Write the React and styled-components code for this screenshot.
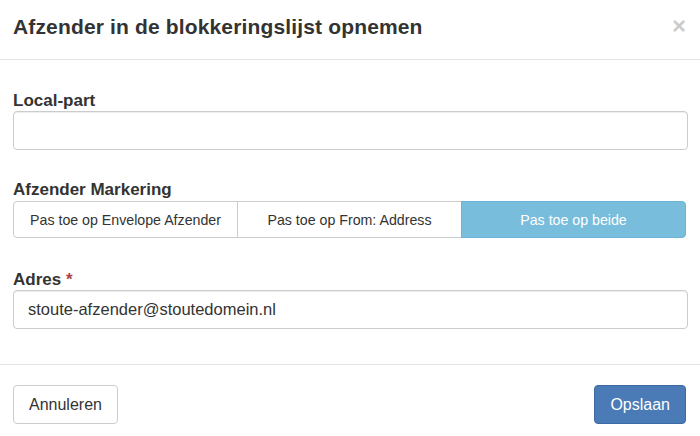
import React, { useState } from "react";
import styled, { createGlobalStyle } from "styled-components";

const GlobalStyle = createGlobalStyle`
  html, body {
    margin: 0;
    padding: 0;
    background: #fff;
  }
  body {
    font-family: "Liberation Sans", Arial, Helvetica, sans-serif;
    color: #333;
  }
  * {
    box-sizing: border-box;
  }
`;

const MODES = [
  { key: "envelope", label: "Pas toe op Envelope Afzender" },
  { key: "from", label: "Pas toe op From: Address" },
  { key: "both", label: "Pas toe op beide" },
];

export default function App() {
  const [localPart, setLocalPart] = useState("");
  const [mode, setMode] = useState("both");
  const [address, setAddress] = useState("stoute-afzender@stoutedomein.nl");

  return (
    <>
      <GlobalStyle />
      <Modal>
        <Header>
          <Title>Afzender in de blokkeringslijst opnemen</Title>
          <Close type="button" aria-label="Sluiten">
            ×
          </Close>
        </Header>
        <Body>
          <Group>
            <Label htmlFor="local-part">Local-part</Label>
            <Input
              id="local-part"
              value={localPart}
              onChange={(e) => setLocalPart(e.target.value)}
            />
          </Group>
          <Group $gap={32}>
            <Label>Afzender Markering</Label>
            <ButtonGroup>
              {MODES.map((m) => (
                <Segment
                  key={m.key}
                  type="button"
                  $active={mode === m.key}
                  onClick={() => setMode(m.key)}
                >
                  {m.label}
                </Segment>
              ))}
            </ButtonGroup>
          </Group>
          <Group>
            <Label htmlFor="adres">
              Adres <Required>*</Required>
            </Label>
            <Input
              id="adres"
              value={address}
              onChange={(e) => setAddress(e.target.value)}
            />
          </Group>
        </Body>
        <Footer>
          <Button type="button">Annuleren</Button>
          <Button type="button" $primary>
            Opslaan
          </Button>
        </Footer>
      </Modal>
    </>
  );
}

const Modal = styled.div`
  width: 700px;
  height: 436px;
  background: #fff;
  display: flex;
  flex-direction: column;
`;

const Header = styled.div`
  display: flex;
  align-items: center;
  justify-content: space-between;
  padding: 12px 13px 17px 13px;
  border-bottom: 1px solid #e5e5e5;
`;

const Title = styled.h4`
  margin: 0;
  font-size: 21px;
  font-weight: bold;
  line-height: 30px;
  letter-spacing: 0.15px;
  color: #333;
`;

const Close = styled.button`
  border: 0;
  background: transparent;
  padding: 0;
  margin: -2px 1px 0 0;
  font-family: "Liberation Sans", Arial, sans-serif;
  font-size: 24px;
  font-weight: bold;
  line-height: 1;
  color: #000;
  opacity: 0.2;
  cursor: pointer;
`;

const Body = styled.div`
  padding: 31px 12px 35px 13px;
`;

const Group = styled.div`
  margin-bottom: ${({ $gap }) => $gap || 30}px;
  &:last-child {
    margin-bottom: 0;
  }
`;

const Label = styled.label`
  display: block;
  font-size: 17px;
  font-weight: bold;
  line-height: 20px;
  color: #333;
`;

const Required = styled.span`
  color: #a94442;
`;

const Input = styled.input`
  display: block;
  width: 100%;
  height: 39px;
  padding: 6px 14px;
  font-family: "Liberation Sans", Arial, sans-serif;
  font-size: 16.5px;
  color: #333;
  background: #fff;
  border: 1px solid #ccc;
  border-radius: 4px;
  box-shadow: inset 0 1px 1px rgba(0, 0, 0, 0.075);
  outline: none;
`;

const ButtonGroup = styled.div`
  display: flex;
  margin: 1px 2px 0 0;
`;

const Segment = styled.button`
  flex: 1;
  height: 37px;
  margin-left: -1px;
  padding: 0 6px;
  font-family: "Liberation Sans", Arial, sans-serif;
  font-size: 14.2px;
  color: ${({ $active }) => ($active ? "#fff" : "#333")};
  background: ${({ $active }) => ($active ? "#78bddb" : "#fff")};
  border: 1px solid ${({ $active }) => ($active ? "#6cb4d5" : "#ccc")};
  cursor: pointer;
  &:first-child {
    margin-left: 0;
    border-radius: 4px 0 0 4px;
  }
  &:last-child {
    border-radius: 0 4px 4px 0;
  }
`;

const Footer = styled.div`
  display: flex;
  justify-content: space-between;
  padding: 20px 14px 0 13px;
  border-top: 1px solid #e5e5e5;
`;

const Button = styled.button`
  height: 39px;
  padding: 0 15px;
  font-family: "Liberation Sans", Arial, sans-serif;
  font-size: 16px;
  color: ${({ $primary }) => ($primary ? "#fff" : "#333")};
  background: ${({ $primary }) => ($primary ? "#4a7bb6" : "#fff")};
  border: 1px solid ${({ $primary }) => ($primary ? "#3d6aa3" : "#ccc")};
  border-radius: 4px;
  cursor: pointer;
`;
